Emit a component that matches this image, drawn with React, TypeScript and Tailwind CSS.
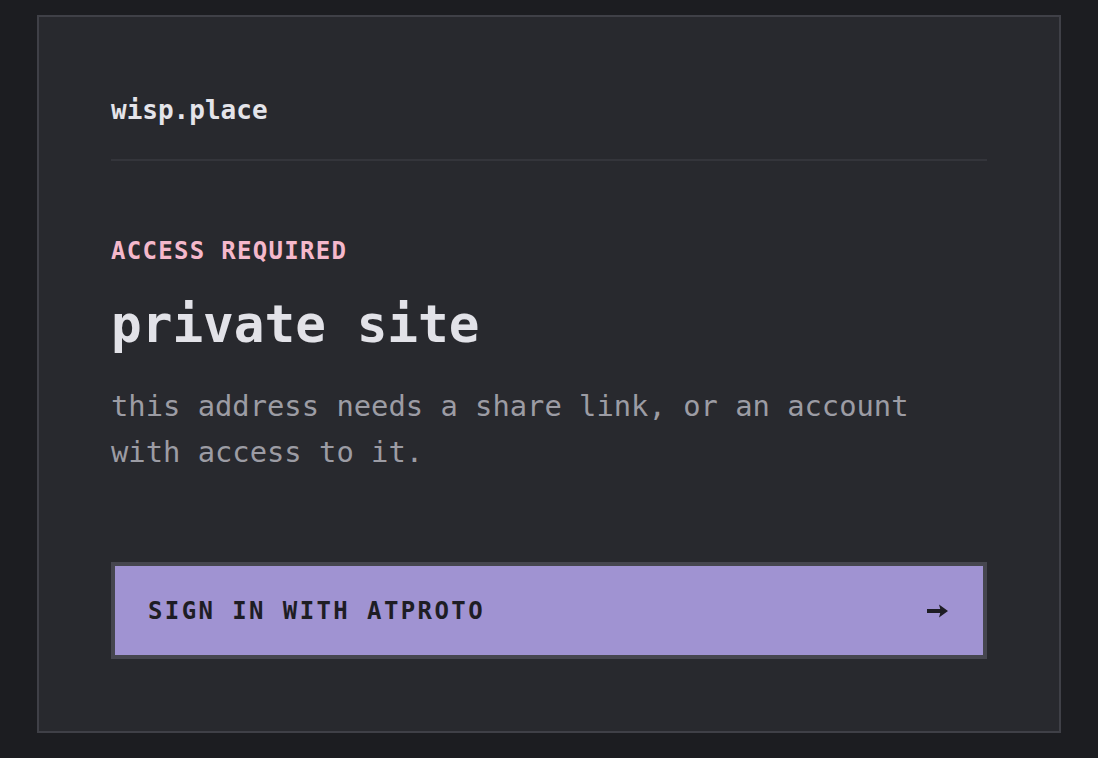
export default function App() {
  return (
    <div
      className="min-h-screen bg-[#1c1d21] pt-[15px] pb-[26px]"
      style={{ fontFamily: '"DejaVu Sans Mono", "Liberation Mono", monospace' }}
    >
      <main className="mx-auto w-[1024px] border-2 border-[#3f4047] bg-[#28292e] px-[72px] pt-[74px] pb-[72px]">
        {/* Header */}
        <header className="border-b-2 border-[#34353b] pb-[29px]">
          <span className="text-[26px] leading-[39px] font-bold text-[#e4e4ea]">wisp.place</span>
        </header>

        {/* Message */}
        <section className="mt-[74px]">
          <p className="text-[24px] leading-[32px] font-bold tracking-[1.3px] text-[#f5b8cb]">
            ACCESS REQUIRED
          </p>
          <h1 className="mt-[27px] text-[51px] leading-[62px] font-bold text-[#e2e2e8]">private site</h1>
          <p className="mt-[27px] text-[28.8px] leading-[46px] text-[#9c9ca4]">
            this address needs a share link, or an account
            <br />
            with access to it.
          </p>
        </section>

        {/* Action */}
        <button className="mt-[87px] flex h-[97px] w-full items-center justify-between border-4 border-[#46464f] bg-[#a093d2] pl-[33px] pr-[35px] text-[#1e1d24]">
          <span className="text-[24px] font-bold tracking-[2.4px]">SIGN IN WITH ATPROTO</span>
          <svg width="21" height="14" viewBox="0 0 21 14" className="fill-[#1e1d24]">
            <rect x="0" y="5" width="15" height="4" />
            <path d="M12 0.5 L21 7 L12 13.5 L13.8 7 Z" />
          </svg>
        </button>
      </main>
    </div>
  );
}
